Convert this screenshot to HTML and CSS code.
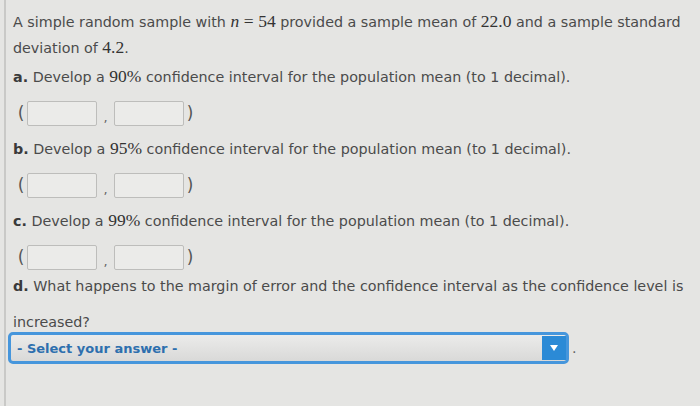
FILE: index.html
```html
<!DOCTYPE html>
<html>
<head>
<meta charset="utf-8">
<link rel="stylesheet" href="styles.css">
</head>
<body>
<div class="page">
  <p class="intro">A simple random sample with <span class="m i">n</span> <span class="m">=</span> <span class="m">54</span> provided a sample mean of <span class="m">22.0</span> and a sample standard deviation of <span class="m">4.2</span>.</p>

  <p class="q"><b>a.</b> Develop a <span class="m">90%</span> confidence interval for the population mean (to 1 decimal).</p>
  <div class="row"><span class="par">(</span><span class="box"></span><span class="comma">,</span><span class="box"></span><span class="par">)</span></div>

  <p class="q"><b>b.</b> Develop a <span class="m">95%</span> confidence interval for the population mean (to 1 decimal).</p>
  <div class="row"><span class="par">(</span><span class="box"></span><span class="comma">,</span><span class="box"></span><span class="par">)</span></div>

  <p class="q"><b>c.</b> Develop a <span class="m">99%</span> confidence interval for the population mean (to 1 decimal).</p>
  <div class="row"><span class="par">(</span><span class="box"></span><span class="comma">,</span><span class="box"></span><span class="par">)</span></div>

  <p class="q qd"><b>d.</b> What happens to the margin of error and the confidence interval as the confidence level is increased?</p>

  <div class="selrow">
    <div class="select">
      <span class="seltext">- Select your answer -</span>
      <span class="arrow"><svg width="10" height="8" viewBox="0 0 10 8"><path d="M1 1 L9 1 L5 7 Z" fill="#ffffff"/></svg></span>
    </div>
    <span class="dot">.</span>
  </div>
</div>
</body>
</html>
```

FILE: styles.css
```css
html, body {
  margin: 0;
  padding: 0;
  background: #e5e5e3;
}
.page {
  margin-left: 4px;
  border-left: 2px solid #c9c9c7;
  min-height: 406px;
  padding: 9px 14px 0 7px;
  box-sizing: border-box;
  font-family: "DejaVu Sans", Verdana, sans-serif;
  font-size: 14.3px;
  color: #4b4b4b;
}
p {
  margin: 0;
  line-height: 25px;
}
.intro {
  margin-bottom: 3px;
}
.m {
  font-family: "Liberation Serif", "DejaVu Serif", serif;
  font-size: 17.5px;
  color: #333;
}
.i {
  font-style: italic;
}
b {
  color: #3a3a3a;
}
.row {
  display: flex;
  align-items: center;
  height: 26px;
  margin: 10px 0 10px 2px;
}
.par {
  font-size: 17px;
  color: #555;
  width: 12px;
  text-align: center;
}
.box {
  width: 68px;
  height: 23px;
  border: 1px solid #bdbdbb;
  border-radius: 2px;
  background: #ebebe9;
}
.comma {
  width: 17px;
  text-align: center;
  color: #666;
  font-size: 13px;
  padding-top: 8px;
}
.qd {
  line-height: 36px;
  margin-top: -12px;
}
.selrow {
  display: flex;
  align-items: center;
  margin-left: -5px;
  margin-top: -8px;
}
.select {
  width: 555px;
  height: 26px;
  border: 3px solid #4696dc;
  border-radius: 5px;
  background: linear-gradient(#ebebea, #d9d9d8);
  display: flex;
  align-items: center;
  justify-content: space-between;
  box-sizing: content-box;
}
.seltext {
  font-weight: bold;
  font-size: 13px;
  color: #2d6fae;
  padding-left: 6px;
}
.arrow {
  width: 24px;
  height: 24px;
  background: #2b8ad6;
  display: flex;
  align-items: center;
  justify-content: center;
}
.dot {
  margin-left: 3px;
  color: #666;
}
```
